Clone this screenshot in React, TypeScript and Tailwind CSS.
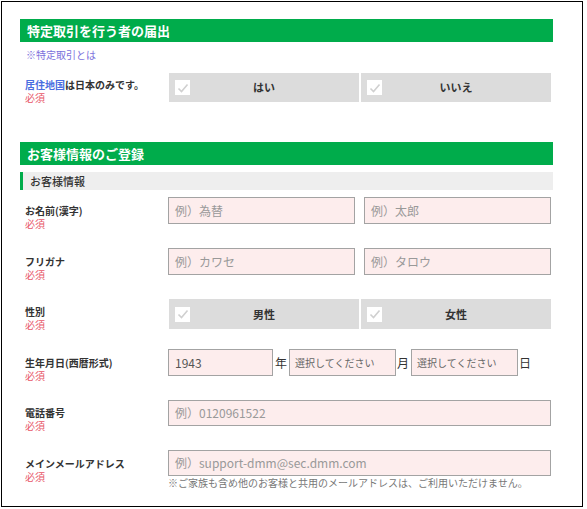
import React from "react";

const font = { fontFamily: '"Noto Sans CJK JP", "Noto Sans", sans-serif' };

function SectionTitle({ children }: { children: React.ReactNode }) {
  return (
    <div className="flex h-[23px] items-center bg-[#00ac4b] pl-[7px] text-[13px] font-bold leading-none text-white">
      {children}
    </div>
  );
}

function Required() {
  return <div className="mt-px text-[10px] leading-[12px] text-[#e8586a]">必須</div>;
}

function Label({ children, pt }: { children: React.ReactNode; pt: string }) {
  return (
    <div className={`w-[148px] shrink-0 pl-[5px] ${pt}`}>
      <div className="text-[10px] font-bold leading-[12px] text-[#333]">{children}</div>
      <Required />
    </div>
  );
}

function Check() {
  return (
    <span className="flex h-[15px] w-[15px] shrink-0 items-center justify-center bg-white">
      <svg width="12" height="12" viewBox="0 0 12 12" fill="none">
        <path d="M1.5 6.5 L4.5 9.5 L10.5 2.5" stroke="#d0d0d0" strokeWidth="1.6" />
      </svg>
    </span>
  );
}

function Toggle({ left, right }: { left: string; right: string }) {
  return (
    <div className="ml-px flex h-full w-[382px] gap-[2px]">
      {[left, right].map((t) => (
        <div key={t} className="flex flex-1 items-center bg-[#dcdcdc] pl-[6px]">
          <Check />
          <span className="flex-1 pr-[21px] text-center text-[11px] font-bold text-[#333]">{t}</span>
        </div>
      ))}
    </div>
  );
}

function Field({ text, w, value = false }: { text: string; w: string; value?: boolean }) {
  return (
    <div
      className={`flex h-full items-center border border-[#a3a3a3] bg-[#fdeded] pl-[6px] text-[12px] ${w} ${
        value ? "text-[#555]" : "text-[#999]"
      }`}
    >
      {text}
    </div>
  );
}

function SelectBox({ w }: { w: string }) {
  return (
    <div className={`flex h-full items-center border border-[#a3a3a3] bg-[#fdeded] pl-[5px] text-[10px] text-[#666] ${w}`}>
      選択してください
    </div>
  );
}

export default function App() {
  return (
    <div className="h-[509px] w-[587px] bg-white pl-px pt-px" style={font}>
      <div className="h-[506px] w-[582px] border border-black pl-[18px] pt-[17px]">
        <div className="w-[533px]">
          <SectionTitle>特定取引を行う者の届出</SectionTitle>
          <div className="mt-[6px] h-[14px] pl-[6px] text-[10px] leading-[14px] text-[#7b70dc]">※特定取引とは</div>

          <div className="mt-[11px] flex h-[29px]">
            <div className="w-[148px] shrink-0 pl-[5px] pt-[6px]">
              <div className="text-[10px] font-bold leading-[12px] text-[#333]">
                <span className="text-[#4a6de0]">居住地国</span>は日本のみです。
              </div>
              <Required />
            </div>
            <Toggle left="はい" right="いいえ" />
          </div>

          <div className="mt-[40px]">
            <SectionTitle>お客様情報のご登録</SectionTitle>
          </div>
          <div className="mt-[7px] flex h-[18px] items-center border-l-[3px] border-[#00ac4b] bg-[#eeeeee] pl-[7px] text-[11px] font-medium leading-none text-[#333]">
            お客様情報
          </div>

          <div className="mt-[7px] flex h-[27px]">
            <Label pt="pt-[8px]">お名前(漢字)</Label>
            <div className="flex gap-[9px]">
              <Field text="例）為替" w="w-[187px]" />
              <Field text="例）太郎" w="w-[187px]" />
            </div>
          </div>

          <div className="mt-[24px] flex h-[27px]">
            <Label pt="pt-[8px]">フリガナ</Label>
            <div className="flex gap-[9px]">
              <Field text="例）カワセ" w="w-[187px]" />
              <Field text="例）タロウ" w="w-[187px]" />
            </div>
          </div>

          <div className="mt-[24px] flex h-[30px]">
            <Label pt="pt-[7px]">性別</Label>
            <Toggle left="男性" right="女性" />
          </div>

          <div className="mt-[20px] flex h-[27px]">
            <Label pt="pt-[8px]">生年月日(西暦形式)</Label>
            <div className="flex items-center text-[12px] text-[#333]">
              <Field text="1943" w="w-[105px]" value />
              <span className="ml-[2px] mr-[3px] w-[11px]">年</span>
              <SelectBox w="w-[107px]" />
              <span className="ml-px mr-[3px] w-[11px]">月</span>
              <SelectBox w="w-[107px]" />
              <span className="ml-px">日</span>
            </div>
          </div>

          <div className="mt-[24px] flex h-[26px]">
            <Label pt="pt-[7px]">電話番号</Label>
            <Field text="例）0120961522" w="w-[383px]" />
          </div>

          <div className="mt-[24px] flex">
            <Label pt="pt-[8px]">メインメールアドレス</Label>
            <div>
              <div className="h-[26px]">
                <Field text="例）support-dmm@sec.dmm.com" w="w-[383px]" />
              </div>
              <div className="mt-px text-[10px] leading-[12px] text-[#777]">
                ※ご家族も含め他のお客様と共用のメールアドレスは、ご利用いただけません。
              </div>
            </div>
          </div>
        </div>
      </div>
    </div>
  );
}
